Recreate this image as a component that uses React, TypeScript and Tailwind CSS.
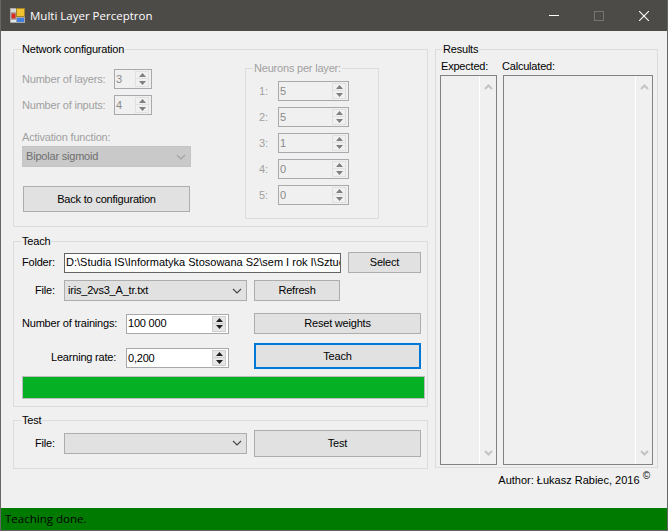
import type { ReactNode } from 'react'

const uiFont = 'font-["Liberation_Sans",Arial,sans-serif]'

const Group = ({ title, className, titleLeft = 'left-[7px]', children }: { title: string; className: string; titleLeft?: string; children: ReactNode }) => (
  <div className={`relative border border-[#dcdcdc] ${className}`}>
    <span className={`absolute top-[-8px] bg-[#f0f0f0] px-[1px] text-[11px] leading-[14px] text-black ${titleLeft}`}>{title}</span>
    {children}
  </div>
)

const SpinArrows = ({ disabled }: { disabled?: boolean }) => {
  const fill = disabled ? '#7f7f7f' : '#1f1f1f'
  const bg = disabled ? 'bg-[#f0f0f0] border-[#e0e0e0]' : 'bg-[#e6e6e6] border-[#d0d0d0]'
  return (
    <div className="flex h-[16px] w-[14px] flex-col">
      <div className={`flex h-[8px] items-center justify-center border ${bg}`}>
        <svg width="7" height="4" viewBox="0 0 7 4"><path d="M3.5 0L7 4H0z" fill={fill} /></svg>
      </div>
      <div className={`flex h-[8px] items-center justify-center border border-t-0 ${bg}`}>
        <svg width="7" height="4" viewBox="0 0 7 4"><path d="M0 0h7L3.5 4z" fill={fill} /></svg>
      </div>
    </div>
  )
}

const Spinner = ({ value, width, disabled }: { value: string; width: string; disabled?: boolean }) => (
  <div className={`flex h-[20px] items-center justify-between border border-[#a9a9ad] pl-[1px] pr-[2px] text-[11px] ${width} ${disabled ? 'bg-[#f0f0f0] text-[#8a8a8a]' : 'bg-white text-black'}`}>
    <span>{value}</span>
    <SpinArrows disabled={disabled} />
  </div>
)

const Chevron = ({ color }: { color: string }) => (
  <svg width="10" height="6" viewBox="0 0 10 6" fill="none"><path d="M1 1l4 4 4-4" stroke={color} strokeWidth="1.1" /></svg>
)

const Combo = ({ value, className, disabled }: { value?: string; className: string; disabled?: boolean }) => (
  <div className={`flex items-center justify-between border pl-[3px] pr-[4px] text-[11px] ${className} ${disabled ? 'border-[#c4c4c4] bg-[#c9c9c9] text-[#6f6f6f]' : 'border-[#adadad] bg-[#e1e1e1] text-black'}`}>
    <span>{value}</span>
    <Chevron color={disabled ? '#a0a0a0' : '#444444'} />
  </div>
)

const Button = ({ label, className, focused }: { label: string; className: string; focused?: boolean }) => (
  <button className={`flex items-center justify-center bg-[#e1e1e1] text-[11px] tracking-[-0.2px] text-black ${focused ? 'border-2 border-[#0078d7]' : 'border border-[#adadad]'} ${className}`}>
    {label}
  </button>
)

const ListPane = ({ className }: { className: string }) => (
  <div className={`flex h-[390px] justify-end border border-[#828282] ${className}`}>
    <div className="flex w-[17px] flex-col items-center justify-between border-l border-white py-[8px]">
      <svg width="9" height="6" viewBox="0 0 9 6" fill="none"><path d="M1 5l3.5-3.5L8 5" stroke="#c4c4c4" strokeWidth="2" /></svg>
      <svg width="9" height="6" viewBox="0 0 9 6" fill="none"><path d="M1 1l3.5 3.5L8 1" stroke="#c4c4c4" strokeWidth="2" /></svg>
    </div>
  </div>
)

const AppIcon = () => (
  <svg width="15" height="15" viewBox="0 0 15 15">
    <rect x="0" y="0" width="15" height="15" fill="#a8a8a8" />
    <rect x="1" y="1" width="5" height="3" fill="#d8d8d8" />
    <rect x="6.5" y="0.5" width="8" height="8" fill="#f2c230" stroke="#9a7a18" strokeWidth="0.8" />
    <rect x="1.5" y="5.5" width="4" height="5" fill="#d62c20" />
    <rect x="1" y="12" width="5" height="2" fill="#e6e6e6" />
    <rect x="7" y="10" width="7" height="4" fill="#3f7fe0" />
  </svg>
)

export default function App() {
  return (
    <div className={`flex h-[531px] w-[668px] flex-col overflow-hidden border-x border-b border-[#666666] bg-[#f0f0f0] tracking-[-0.2px] ${uiFont}`}>
      <div className="flex h-[31px] shrink-0 items-center bg-[#4d4b48] pl-[9px] tracking-normal text-white">
        <AppIcon />
        <span className="ml-[5px] font-['Open_Sans',sans-serif] text-[11.5px]">Multi Layer Perceptron</span>
        <div className="ml-auto mr-[18px] flex items-center gap-[35px]">
          <div className="h-[1px] w-[10px] bg-white" />
          <div className="h-[10px] w-[10px] border border-[#75736f]" />
          <svg width="10" height="10" viewBox="0 0 10 10"><path d="M0 0l10 10M10 0L0 10" stroke="#fff" strokeWidth="1.1" /></svg>
        </div>
      </div>

      <div className="flex flex-1 pl-[12px] pt-[18px]">
        <div className="flex w-[415px] flex-col">
          <Group title="Network configuration" className="flex h-[178px] pl-[8px]">
            <div className="w-[223px]">
              <div className="mt-[19px] flex items-center whitespace-nowrap text-[11px] text-[#a0a0a0]">
                <span className="w-[92px]">Number of layers:</span>
                <Spinner value="3" width="w-[38px]" disabled />
              </div>
              <div className="mt-[6px] flex items-center whitespace-nowrap text-[11px] text-[#a0a0a0]">
                <span className="w-[92px]">Number of inputs:</span>
                <Spinner value="4" width="w-[38px]" disabled />
              </div>
              <div className="mt-[15px] text-[11px] leading-[14px] text-[#a0a0a0]">Activation function:</div>
              <Combo value="Bipolar sigmoid" className="mt-[2px] h-[21px] w-[169px]" disabled />
              <Button label="Back to configuration" className="ml-[1px] mt-[19px] h-[26px] w-[167px]" />
            </div>
            <div className="relative mt-[18px] h-[151px] w-[134px] border border-[#dcdcdc] pl-[13px] pt-[12px]">
              <span className="absolute left-[7px] top-[-8px] whitespace-nowrap bg-[#f0f0f0] px-[1px] text-[11px] leading-[14px] text-[#a0a0a0]">Neurons per layer:</span>
              <div className="flex flex-col gap-[6px]">
                {[['1:', '5'], ['2:', '5'], ['3:', '1'], ['4:', '0'], ['5:', '0']].map(([label, value]) => (
                  <div key={label} className="flex items-center text-[11px] text-[#a0a0a0]">
                    <span className="w-[19px]">{label}</span>
                    <Spinner value={value} width="w-[71px]" disabled />
                  </div>
                ))}
              </div>
            </div>
          </Group>

          <Group title="Teach" className="mt-[14px] h-[166px] pl-[8px]">
            <div className="mt-[10px] flex items-center text-[11px]">
              <span className="w-[42px]">Folder:</span>
              <div className="flex h-[20px] w-[277px] items-center overflow-hidden whitespace-nowrap border border-[#646464] bg-white pl-[1px] tracking-normal">D:\Studia IS\Informatyka Stosowana S2\sem I rok I\Sztuczna</div>
              <Button label="Select" className="ml-[7px] h-[21px] w-[73px]" />
            </div>
            <div className="mt-[7px] flex items-center text-[11px]">
              <span className="w-[42px] pl-[13px]">File:</span>
              <Combo value="iris_2vs3_A_tr.txt" className="h-[21px] w-[183px]" />
              <Button label="Refresh" className="ml-[7px] h-[21px] w-[86px]" />
            </div>
            <div className="mt-[12px] flex items-center whitespace-nowrap text-[11px]">
              <span className="w-[104px]">Number of trainings:</span>
              <Spinner value="100 000" width="w-[103px]" />
              <Button label="Reset weights" className="ml-[25px] h-[21px] w-[167px]" />
            </div>
            <div className="mt-[9px] flex items-center whitespace-nowrap text-[11px]">
              <span className="mt-[2px] w-[104px] pl-[29px]">Learning rate:</span>
              <Spinner value="0,200" width="mt-[4px] w-[103px]" />
              <Button label="Teach" className="ml-[25px] h-[26px] w-[167px]" focused />
            </div>
            <div className="mt-[7px] h-[23px] w-[403px] border border-[#bcbcbc] bg-[#06b025]" />
          </Group>

          <Group title="Test" className="mt-[13px] flex h-[49px] items-center pb-[3px] pl-[8px] text-[11px]">
            <span className="w-[42px] pl-[13px]">File:</span>
            <Combo className="h-[21px] w-[183px]" />
            <Button label="Test" className="ml-[7px] h-[27px] w-[167px]" />
          </Group>
        </div>

        <div className="ml-[7px] flex w-[223px] flex-col">
          <Group title="Results" titleLeft="left-[6px]" className="h-[419px] pl-[4px]">
            <div className="mt-[9px] flex text-[11px] leading-[14px]">
              <span className="w-[62px] pl-[1px]">Expected:</span>
              <span>Calculated:</span>
            </div>
            <div className="mt-[2px] flex gap-[6px]">
              <ListPane className="w-[57px]" />
              <ListPane className="w-[150px]" />
            </div>
          </Group>
          <div className="mt-[5px] pr-[8px] text-right text-[11px] leading-[14px] tracking-normal">Author: Łukasz Rabiec, 2016 <sup className="text-[10px]">©</sup></div>
        </div>
      </div>

      <div className="flex h-[22px] shrink-0 items-center bg-[#007a00] pl-[4px] font-['Open_Sans',sans-serif] text-[11.5px] tracking-normal text-black">Teaching done.</div>
    </div>
  )
}
